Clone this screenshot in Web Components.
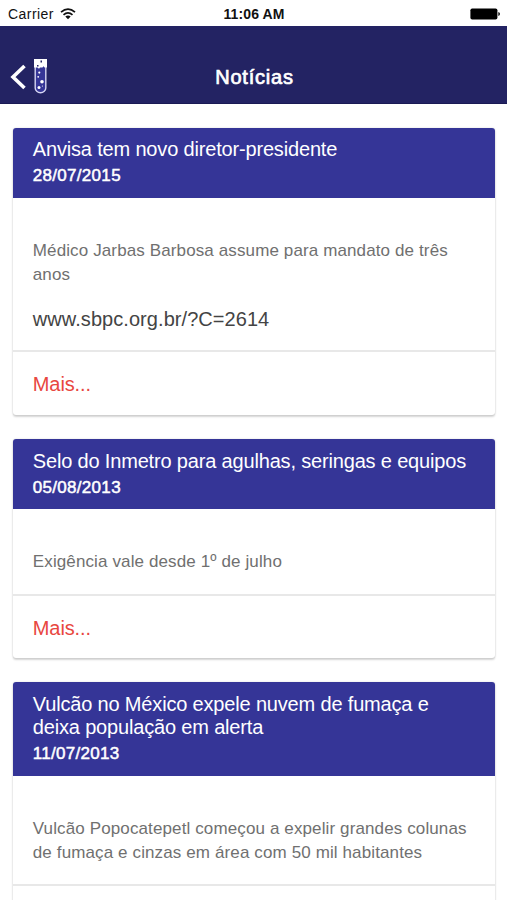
<!DOCTYPE html>
<html lang="pt-BR">
<head>
<meta charset="utf-8">
<title>Notícias</title>
<style>
	body {
		margin: 0;
		height: 900px;
		overflow: hidden;
		background: #fff;
		font-family: "Liberation Sans", Arial, sans-serif;
	}
</style>
</head>
<body>
<news-app></news-app>
<script>
class StatusBar extends HTMLElement {
	constructor() {
		super();
		this.attachShadow({ mode: 'open' });
		this.shadowRoot.innerHTML = `
			<style>
				:host {
					display: grid;
					grid-template-columns: 1fr auto 1fr;
					align-items: center;
					box-sizing: border-box;
					height: 25.6px;
					padding: 2px 7px 0 8px;
					color: #111;
					font-size: 14px;
				}
				.carrier {
					display: flex;
					align-items: center;
					gap: 6px;
					letter-spacing: 0.45px;
				}
				.time {
					font-weight: bold;
					letter-spacing: 0.1px;
				}
				.battery {
					justify-self: end;
				}
				svg {
					display: block;
				}
			</style>
			<div class="carrier">
				<span>Carrier</span>
				<svg width="16" height="12" viewBox="0 0 16 12" fill="none" stroke="#111" stroke-width="1.7">
					<path d="M1 4.2Q8-2 15 4.2"/>
					<path d="M3.5 6.8Q8 2.8 12.5 6.8"/>
					<path d="M8 11.3L5.3 8.6Q8 6.3 10.7 8.6Z" fill="#111" stroke="none"/>
				</svg>
			</div>
			<span class="time">11:06 AM</span>
			<svg class="battery" width="30" height="12" viewBox="0 0 30 12">
				<rect x="0.4" y="0.4" width="27" height="11.2" rx="1.8" fill="#000"/>
				<path d="M28.3 4Q30 4.4 30 6T28.3 8Z" fill="#111"/>
			</svg>
		`;
	}
}

class NavBar extends HTMLElement {
	constructor() {
		super();
		this.attachShadow({ mode: 'open' });
		this.shadowRoot.innerHTML = `
			<style>
				:host {
					display: grid;
					grid-template-columns: 1fr auto 1fr;
					align-items: center;
					box-sizing: border-box;
					height: 78px;
					padding: 25px 10px 0;
					background: #232363;
					border-bottom: 1px solid #1a1a54;
					color: #fff;
				}
				.back {
					display: flex;
					align-items: center;
					gap: 7px;
				}
				/* thin stroke over the regular face gives a medium weight */
				h1 {
					margin: 0;
					padding-left: 2px;
					font-size: 20px;
					font-weight: normal;
					line-height: 24px;
					letter-spacing: 0.8px;
					-webkit-text-stroke: 0.7px #fff;
				}
			</style>
			<div class="back">
				<svg width="16" height="26" viewBox="0 0 16 26" fill="none" stroke="#fff" stroke-width="3.6">
					<path d="M14.5 2L3 13L14.5 24"/>
				</svg>
				<svg width="15" height="36" viewBox="0 0 15 36">
					<path d="M2.2 2V29A5.3 4.7 0 0 0 12.8 29V2" fill="#353597" stroke="#d5d5f2" stroke-width="1.4"/>
					<path d="M1 0H14V8.5H11.5L10.5 7.2L9.5 8.5H7L6 9.8L4.5 8.5H1Z" fill="#fff"/>
					<path d="M7.5 1.5H9V3.5H7.5ZM4 6H5.5V7.5H4Z" fill="#232363"/>
					<g fill="#fff">
						<circle cx="6.3" cy="13.6" r="1.1"/>
						<circle cx="5.2" cy="17.8" r="0.9"/>
						<circle cx="9" cy="22.8" r="1.8"/>
						<circle cx="6" cy="28.6" r="1.5"/>
						<circle cx="9.4" cy="27" r="0.6"/>
					</g>
				</svg>
			</div>
			<h1><slot></slot></h1>
		`;
	}
}

class NewsCard extends HTMLElement {
	constructor() {
		super();
		this.attachShadow({ mode: 'open' });
		this.shadowRoot.innerHTML = `
			<style>
				:host {
					display: block;
					border-radius: 3px;
					background: #fff;
					box-shadow: 0 2px 2px rgba(0, 0, 0, 0.16), 0 0 2px rgba(0, 0, 0, 0.16);
				}
				header {
					padding: 10.5px 20px 7.2px;
					border-radius: 3px 3px 0 0;
					background: #353597;
					color: #fff;
				}
				h2 {
					margin: 0;
					font-size: 20px;
					font-weight: normal;
					line-height: 23.3px;
					letter-spacing: -0.17px;
				}
				time {
					display: block;
					font-size: 17px;
					line-height: 29px;
					letter-spacing: 0.3px;
					-webkit-text-stroke: 0.5px #fff;
				}
				.body {
					padding: 41.3px 20px 18.7px;
					color: #707070;
					font-size: 17px;
					line-height: 24.4px;
					letter-spacing: 0.12px;
				}
				::slotted(p) {
					margin: 0;
				}
				::slotted(a) {
					display: block;
					margin-top: 19.6px;
					color: #444;
					font-size: 20px;
					letter-spacing: 0.06px;
					text-decoration: none;
				}
				footer {
					box-sizing: border-box;
					height: 64.4px;
					padding: 20px;
					border-top: 2px solid #e8e8e8;
					color: #e8473f;
					font-size: 20px;
					line-height: 24px;
					letter-spacing: -0.1px;
				}
			</style>
			<header>
				<h2><slot name="title"></slot></h2>
				<time><slot name="date"></slot></time>
			</header>
			<div class="body"><slot></slot></div>
			<footer><slot name="more"></slot></footer>
		`;
	}
}

class NewsApp extends HTMLElement {
	constructor() {
		super();
		this.attachShadow({ mode: 'open' });
		this.shadowRoot.innerHTML = `
			<style>
				:host {
					display: block;
					height: 900px;
					overflow: hidden;
				}
				main {
					display: flex;
					flex-direction: column;
					gap: 24.4px;
					padding: 24px 12px 0 12.8px;
				}
			</style>
			<status-bar></status-bar>
			<nav-bar>Notícias</nav-bar>
			<main>
				<news-card>
					<span slot="title">Anvisa tem novo diretor-presidente</span>
					<span slot="date">28/07/2015</span>
					<p>Médico Jarbas Barbosa assume para mandato de três anos</p>
					<a>www.sbpc.org.br/?C=2614</a>
					<span slot="more">Mais...</span>
				</news-card>
				<news-card>
					<span slot="title">Selo do Inmetro para agulhas, seringas e equipos</span>
					<span slot="date">05/08/2013</span>
					<p>Exigência vale desde 1º de julho</p>
					<span slot="more">Mais...</span>
				</news-card>
				<news-card>
					<span slot="title">Vulcão no México expele nuvem de fumaça e deixa população em alerta</span>
					<span slot="date">11/07/2013</span>
					<p>Vulcão Popocatepetl começou a expelir grandes colunas de fumaça e cinzas em área com 50 mil habitantes</p>
				</news-card>
			</main>
		`;
	}
}

window.customElements.define('status-bar', StatusBar);
window.customElements.define('nav-bar', NavBar);
window.customElements.define('news-card', NewsCard);
window.customElements.define('news-app', NewsApp);
</script>
</body>
</html>
